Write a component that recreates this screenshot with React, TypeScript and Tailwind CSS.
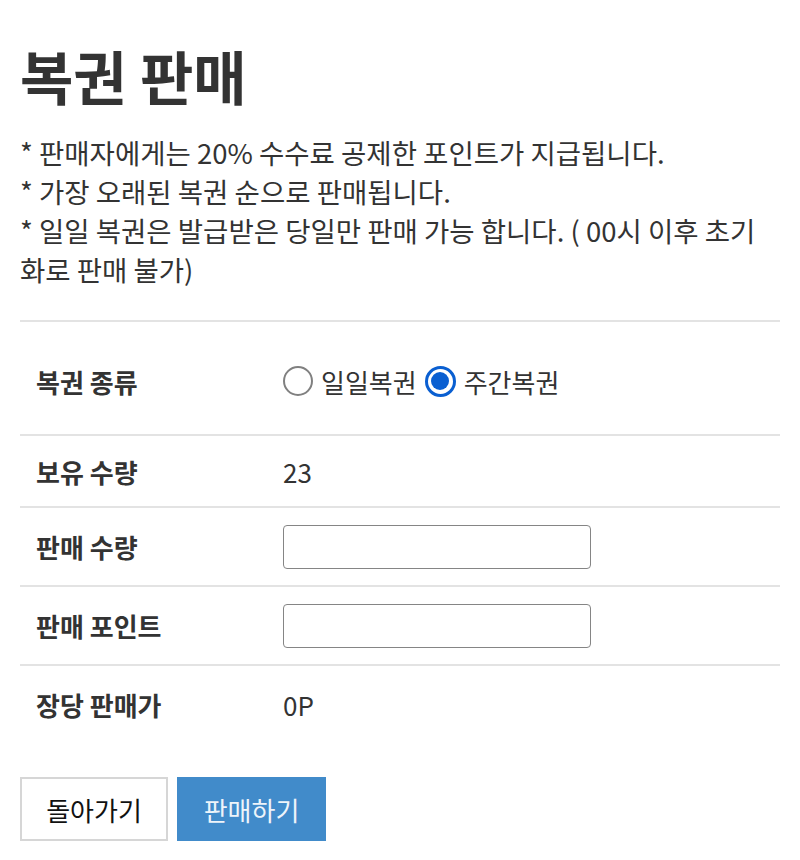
import { useState } from "react";

const font = { fontFamily: '"Noto Sans CJK KR", "Noto Sans", sans-serif' };

function Radio({ checked, label, onClick }: { checked: boolean; label: string; onClick: () => void }) {
    return (
        <button type="button" onClick={onClick} className="flex items-center gap-[8px]">
            {checked ? (
                <span className="w-[31px] h-[31px] rounded-full border-[3px] border-[#0a5fd1] flex items-center justify-center bg-white">
                    <span className="w-[18px] h-[18px] rounded-full bg-[#0a5fd1]" />
                </span>
            ) : (
                <span className="w-[30px] h-[30px] rounded-full border-2 border-[#808080] bg-white" />
            )}
            <span className="text-[26px] text-[#333]">{label}</span>
        </button>
    );
}

export default function App() {
    const [kind, setKind] = useState<'daily' | 'weekly'>('weekly');
    const [qty, setQty] = useState('');
    const [points, setPoints] = useState('');

    return (
        <div style={font} className="w-[800px] h-[860px] bg-white px-5 pt-[41px] text-[#333]">
            <h1 className="text-[58px] font-bold leading-[68px]">복권 판매</h1>

            {/* Notes */}
            <div className="mt-[24px] text-[27.5px] leading-[39px]">
                <p>* 판매자에게는 20% 수수료 공제한 포인트가 지급됩니다.</p>
                <p>* 가장 오래된 복권 순으로 판매됩니다.</p>
                <p>* 일일 복권은 발급받은 당일만 판매 가능 합니다. ( 00시 이후 초기화로 판매 불가)</p>
            </div>

            {/* Table */}
            <div className="mt-[31px] border-t-2 border-[#e3e3e3]">
                <div className="flex items-center h-[114px] pt-[6px] border-b-2 border-[#e3e3e3]">
                    <div className="w-[263px] pl-4 text-[26px] font-bold">복권 종류</div>
                    <div className="flex items-center gap-[8px]">
                        <Radio checked={kind === 'daily'} label="일일복권" onClick={() => setKind('daily')} />
                        <Radio checked={kind === 'weekly'} label="주간복권" onClick={() => setKind('weekly')} />
                    </div>
                </div>
                <div className="flex items-center h-[72px] border-b-2 border-[#e3e3e3]">
                    <div className="w-[263px] pl-4 text-[26px] font-bold">보유 수량</div>
                    <div className="text-[26px]">23</div>
                </div>
                <div className="flex items-center h-[79px] border-b-2 border-[#e3e3e3]">
                    <div className="w-[263px] pl-4 text-[26px] font-bold">판매 수량</div>
                    <input
                        type="text"
                        value={qty}
                        onChange={(e) => setQty(e.target.value)}
                        className="w-[308px] h-[44px] rounded-[4px] border-[1.5px] border-[#858585] px-2 text-[22px] outline-none"
                    />
                </div>
                <div className="flex items-center h-[79px] border-b-2 border-[#e3e3e3]">
                    <div className="w-[263px] pl-4 text-[26px] font-bold">판매 포인트</div>
                    <input
                        type="text"
                        value={points}
                        onChange={(e) => setPoints(e.target.value)}
                        className="w-[308px] h-[44px] rounded-[4px] border-[1.5px] border-[#858585] px-2 text-[22px] outline-none"
                    />
                </div>
                <div className="flex items-center h-[76px]">
                    <div className="w-[263px] pl-4 text-[26px] font-bold">장당 판매가</div>
                    <div className="text-[26px]">0P</div>
                </div>
            </div>

            {/* Buttons */}
            <div className="mt-[35px] flex gap-[9px]">
                <button className="w-[148px] h-[64px] border-2 border-[#d6d6d6] bg-white text-[26px] text-[#111]">돌아가기</button>
                <button className="w-[149px] h-[64px] bg-[#418bca] text-[26px] text-[#eef4fa]">판매하기</button>
            </div>
        </div>
    );
}
